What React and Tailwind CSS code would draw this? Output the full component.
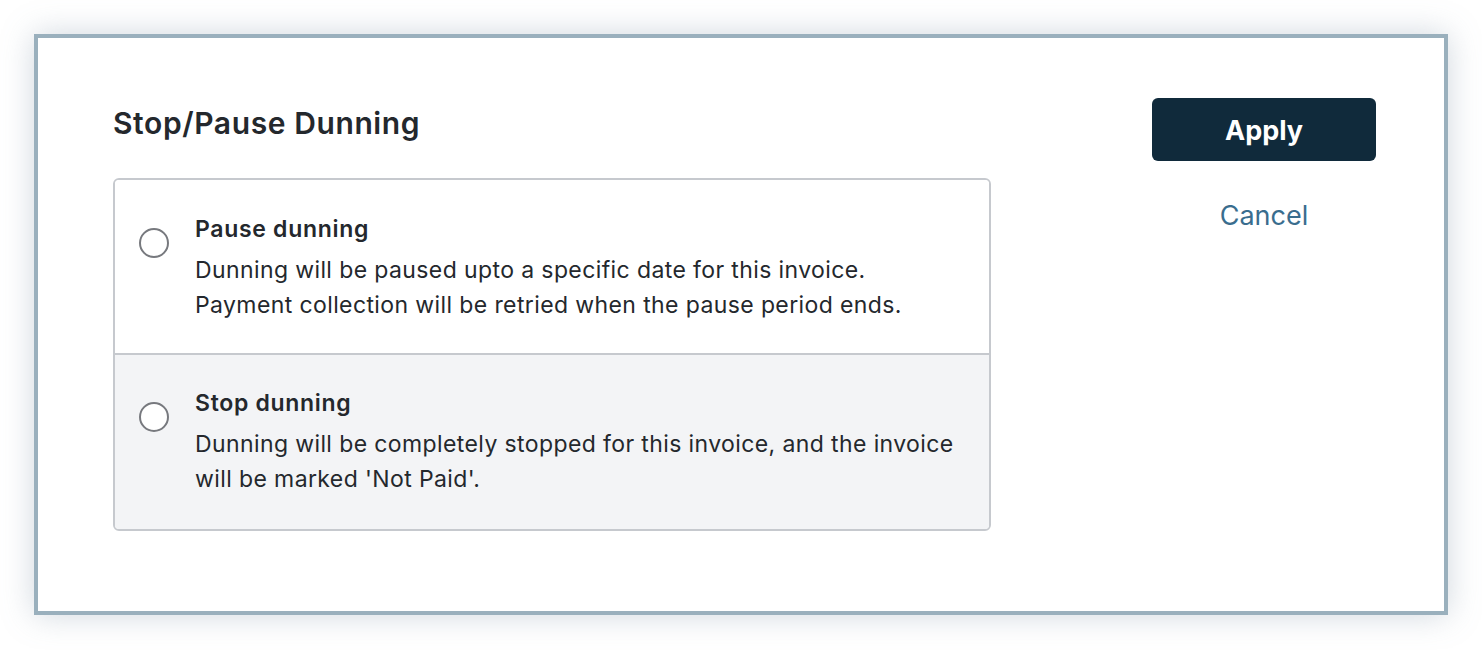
export default function App() {
  const options = [
    {
      title: 'Pause dunning',
      desc: ['Dunning will be paused upto a specific date for this invoice.', 'Payment collection will be retried when the pause period ends.'],
      row: 'h-[173px] pt-[32px] bg-white',
    },
    {
      title: 'Stop dunning',
      desc: ['Dunning will be completely stopped for this invoice, and the invoice', "will be marked 'Not Paid'."],
      row: 'h-[176px] pt-[31px] border-t-2 border-[#c6c9ce] bg-[#f3f4f6]',
    },
  ];

  return (
    <div className="min-h-screen bg-white p-[34px] font-['Inter',sans-serif] text-[#24282d]">
      <div className="flex h-[581px] w-[1414px] justify-between border-4 border-[#9ab0bd] bg-white pl-[75px] pr-[68px] pt-[60px] shadow-[0_0_30px_rgba(120,140,160,0.35)]">
        <div className="w-[878px]">
          <h1 className="-mt-[3px] text-[30px] font-semibold leading-[56px] tracking-[0.02em]">Stop/Pause Dunning</h1>
          <div className="mt-[27px] overflow-hidden rounded-md border-2 border-[#c6c9ce]">
            {options.map((o) => (
              <div key={o.title} className={`flex items-start gap-[26px] pl-[24px] ${o.row}`}>
                <span className="mt-[16px] block h-[30px] w-[30px] shrink-0 rounded-full border-2 border-[#77797e] bg-white" />
                <div>
                  <div className="text-[23px] font-semibold leading-[35px] tracking-[0.03em]">{o.title}</div>
                  <div className="mt-[6px] text-[23px] leading-[35px] tracking-[0.017em]">
                    {o.desc.map((d) => (
                      <div key={d}>{d}</div>
                    ))}
                  </div>
                </div>
              </div>
            ))}
          </div>
        </div>
        <div className="flex w-[224px] flex-col items-center">
          <button className="h-[63px] w-full rounded-md bg-[#102a3b] pt-[4px] text-[27px] font-bold text-white">Apply</button>
          <button className="mt-[35px] text-[27px] text-[#3a6d8e]">Cancel</button>
        </div>
      </div>
    </div>
  );
}
